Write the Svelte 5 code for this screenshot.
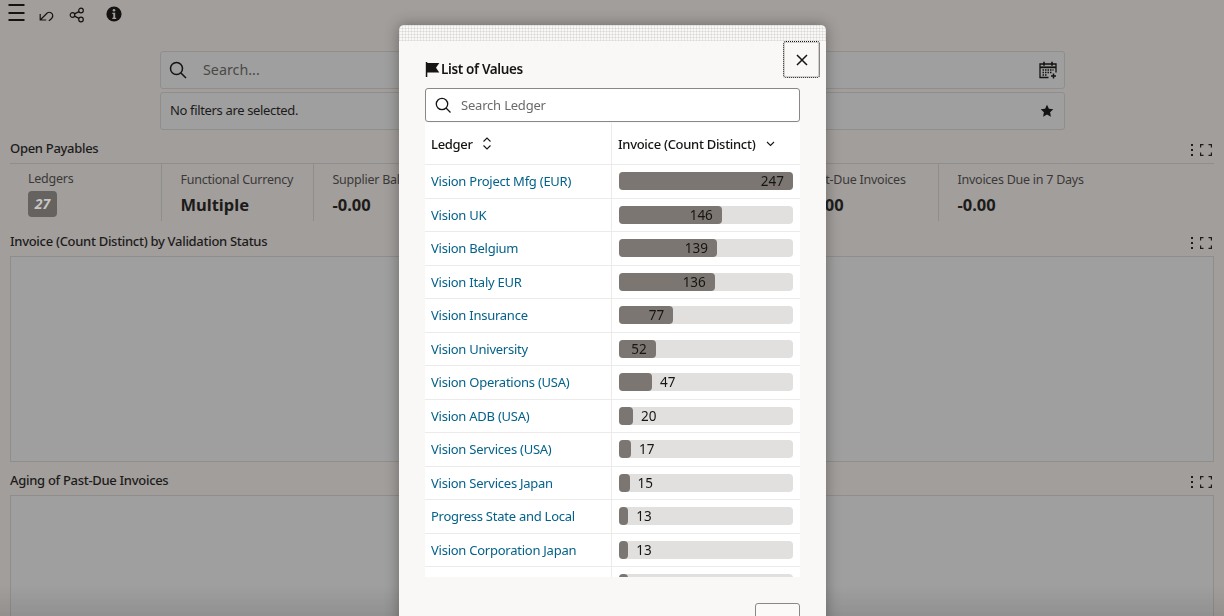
<script>
	const rows = [
		{ name: "Vision Project Mfg (EUR)", count: 247 },
		{ name: "Vision UK", count: 146 },
		{ name: "Vision Belgium", count: 139 },
		{ name: "Vision Italy EUR", count: 136 },
		{ name: "Vision Insurance", count: 77 },
		{ name: "Vision University", count: 52 },
		{ name: "Vision Operations (USA)", count: 47 },
		{ name: "Vision ADB (USA)", count: 20 },
		{ name: "Vision Services (USA)", count: 17 },
		{ name: "Vision Services Japan", count: 15 },
		{ name: "Progress State and Local", count: 13 },
		{ name: "Vision Corporation Japan", count: 13 },
		{ name: "", count: 11 },
	];
	const max = 247;
	const kpis = [
		{ label: "Functional Currency", value: "Multiple" },
		{ label: "Supplier Balance", value: "-0.00" },
		{ label: "Past-Due Invoices", value: "-0.00" },
		{ label: "Invoices Due in 7 Days", value: "-0.00" },
	];
</script>

<div class="page">
	<header class="toolbar">
		<svg class="menu" width="18" height="17" viewBox="0 0 18 17"><path d="M.500 1h16M.500 9h16M.500 16h16" stroke="#141312" stroke-width="2" fill="none" /></svg>
		<svg class="undo" width="16" height="16" viewBox="0 0 16 16" fill="none" stroke="#141312" stroke-width="1.200"><path d="M2.200 6v6h6M2.200 12L9.200 5c2.500-1.800 5.600 0 5.600 2.800 0 1.600-1.400 3.400-4 4.900" /></svg>
		<svg class="share" width="16" height="16" viewBox="0 0 16 16" fill="none" stroke="#141312" stroke-width="1.200"><circle cx="3.500" cy="8" r="2.300" /><circle cx="12" cy="3.500" r="2.300" /><circle cx="12" cy="12.500" r="2.300" /><path d="M5.500 6.900l4.500-2.300M5.500 9.100l4.500 2.300" /></svg>
		<svg class="info" width="16" height="16" viewBox="0 0 16 16"><circle cx="8" cy="8" r="7.600" fill="#141312" /><circle cx="8" cy="4.200" r="1.300" fill="#a29e9c" /><path d="M6.300 6.800h2.900v5h1v1.300H6.300v-1.300h1v-3.700h-1z" fill="#a29e9c" /></svg>
	</header>

	<section class="filters">
		<div class="filter-box search">
			<svg width="18" height="18" viewBox="0 0 18 18" fill="none" stroke="#141312" stroke-width="1.500"><circle cx="7.500" cy="7.500" r="6" /><path d="M12 12l5 5" /></svg>
			<span class="placeholder">Search...</span>
			<svg class="calendar" width="18" height="18" viewBox="0 0 18 18" fill="none" stroke="#141312" stroke-width="1.300"><path d="M9.500 16.500H1V3h16v8.500" /><path d="M1 6.300h16" stroke-width="1.800" /><path d="M5 .8v4M13 .8v4" stroke-width="1.600" /><path d="M3.500 9h11M3.500 11.500h9M3.500 14h5" stroke-dasharray="1.500 1" /><path d="M14.500 12.500v5M12 15h5" stroke-width="1.500" /></svg>
		</div>
		<div class="filter-box status">
			<span>No filters are selected.</span>
			<svg class="star" width="14" height="14" viewBox="0 0 14 14"><path d="M7 .8l1.900 4 4.400.5-3.200 3 .8 4.400L7 10.600 3.100 12.700l.8-4.400-3.200-3 4.400-.5z" fill="#141312" /></svg>
		</div>
	</section>

	<section class="open-payables">
		<div class="section-head ruled">
			<h2>Open Payables</h2>
			{@render tools()}
		</div>
		<div class="kpis">
			<div class="kpi first">
				<span class="kpi-label">Ledgers</span>
				<span class="badge">27</span>
			</div>
			{#each kpis as kpi}
				<div class="kpi">
					<span class="kpi-label">{kpi.label}</span>
					<span class="kpi-value">{kpi.value}</span>
				</div>
			{/each}
		</div>
	</section>

	<section class="chart-section">
		<div class="section-head">
			<h2>Invoice (Count Distinct) by Validation Status</h2>
			{@render tools()}
		</div>
		<div class="chart tall"></div>
	</section>

	<section class="chart-section">
		<div class="section-head">
			<h2>Aging of Past-Due Invoices</h2>
			{@render tools()}
		</div>
		<div class="chart"></div>
	</section>
</div>

<div class="bottom-fade"></div>

<div class="modal">
	<div class="modal-strip"></div>
	<button class="close" aria-label="Close">
		<svg width="12" height="12" viewBox="0 0 12 12" stroke="#161513" stroke-width="1.500"><path d="M1 1l10 10M11 1L1 11" /></svg>
	</button>
	<div class="modal-body">
		<h3>
			<svg width="15" height="15" viewBox="0 0 15 15"><path d="M.800 0h1.500v15H.800zM2.300 1h12l-3.300 4.800 3.300 4.700h-12z" fill="#161513" /></svg>
			List of Values
		</h3>
		<div class="modal-search">
			<svg width="16" height="16" viewBox="0 0 16 16" fill="none" stroke="#161513" stroke-width="1.300"><circle cx="7" cy="7" r="5.700" /><path d="M11 11l4.500 4.500" /></svg>
			<span>Search Ledger</span>
		</div>
		<div class="table">
			<div class="row head">
				<div class="cell name">
					Ledger
					<svg class="sort updown" width="10" height="13" viewBox="0 0 10 13" fill="none" stroke="#161513" stroke-width="1.100"><path d="M1.500 4.500L5 1l3.500 3.500M1.500 8.500L5 12l3.500-3.500" /></svg>
				</div>
				<div class="cell measure-head">
					Invoice (Count Distinct)
					<svg class="sort" width="9" height="6" viewBox="0 0 9 6" fill="none" stroke="#161513" stroke-width="1.100"><path d="M1 1l3.500 3.500L8 1" /></svg>
				</div>
			</div>
			{#each rows as row}
				{@const width = (row.count / max) * 100}
				<div class="row">
					<div class="cell name"><a href="#ledger">{row.name}</a></div>
					<div class="cell">
						<div class="bar">
							<div class="fill" style="width: {width}%">
								{#if row.count > 50}<span class="inside">{row.count}</span>{/if}
							</div>
							{#if row.count <= 50 && row.name}<span class="outside">{row.count}</span>{/if}
						</div>
					</div>
				</div>
			{/each}
		</div>
	</div>
	<div class="modal-foot"><button class="done" aria-label="Done"></button></div>
</div>

{#snippet tools()}
	<div class="tools">
		<svg width="4" height="12" viewBox="0 0 4 12"><path d="M1 0h2v2H1zM1 5h2v2H1zM1 10h2v2H1z" fill="#1c1b1a" /></svg>
		<svg width="12" height="12" viewBox="0 0 12 12" fill="none" stroke="#1c1b1a" stroke-width="1.200"><path d="M.6 3.500V.6h2.900M8.500.6h2.900v2.900M11.400 8.500v2.900H8.500M3.500 11.400H.6V8.500" /></svg>
	</div>
{/snippet}

<style>
	:global(body) {
		margin: 0;
		background: #a29e9c;
		overflow: hidden;
		font-family: "Noto Sans", "Open Sans", sans-serif;
		color: #1c1b1a;
	}

	.page {
		height: 616px;
		overflow: hidden;
		padding: 0 10px;
		box-sizing: border-box;
	}

	.toolbar {
		display: flex;
		align-items: center;
		height: 30px;
		margin-left: -2px;
	}

	.menu {
		margin-top: -5px;
	}

	.undo {
		margin-left: 12px;
		margin-top: 1px;
	}

	.share {
		margin-left: 15px;
	}

	.info {
		margin-left: 20.500px;
		margin-top: -2px;
	}

	.filters {
		display: flex;
		flex-direction: column;
		gap: 3px;
		margin: 21px 149px 0 150px;
	}

	.filter-box {
		display: flex;
		align-items: center;
		box-sizing: border-box;
		background: #9f9f9f;
		border: 1px solid #8f8e8c;
		border-radius: 3px;
	}

	.search {
		height: 38px;
		padding: 0 7px 0 8px;
	}

	.placeholder {
		margin-left: 16px;
		padding-bottom: 2px;
		font-size: 14.300px;
		color: #4a4947;
	}

	.calendar {
		margin-left: auto;
	}

	.status {
		height: 38px;
		padding: 0 10px 0 9px;
		font-size: 13px;
		letter-spacing: -0.35px;
		justify-content: space-between;
	}

	.status span {
		padding-bottom: 2px;
	}

	.open-payables {
		margin-top: 9px;
	}

	.section-head {
		display: flex;
		align-items: center;
		justify-content: space-between;
		height: 24px;
		padding-right: 2px;
	}

	.section-head.ruled {
		box-sizing: content-box;
		height: 20px;
		padding-bottom: 4px;
		border-bottom: 1px solid #8f8e8c;
		align-items: flex-start;
	}

	.section-head.ruled .tools {
		margin-top: 5px;
	}

	h2 {
		margin: 0;
		font-size: 13px;
		line-height: 18px;
		font-weight: 500;
		letter-spacing: -0.3px;
	}

	.tools {
		display: flex;
		align-items: center;
		gap: 6px;
	}

	.kpis {
		display: grid;
		grid-template-columns: 152px 152px 473px 152px 1fr;
		height: 58px;
	}

	.kpi {
		display: flex;
		flex-direction: column;
		padding: 7px 0 0 18.500px;
		border-right: 1px solid #8f8e8c;
		box-sizing: border-box;
		height: 57px;
		gap: 5px;
	}

	.kpi:last-child {
		border-right: none;
	}

	.kpi.first {
		padding-left: 18px;
		padding-top: 6px;
		gap: 4px;
	}

	.kpi-label {
		font-size: 12.500px;
		line-height: 17px;
		letter-spacing: -0.25px;
		color: #3a3937;
	}

	.kpi-value {
		font-size: 16.500px;
		line-height: 24px;
		font-weight: 700;
	}

	.badge {
		width: 29px;
		height: 26px;
		line-height: 26px;
		text-align: center;
		border-radius: 4px;
		background: #656260;
		color: #c8c6c4;
		font-size: 14px;
		font-weight: 700;
		font-style: italic;
	}

	.chart-section .section-head {
		height: 34px;
		padding-top: 4px;
		box-sizing: border-box;
	}

	.chart-section .tools {
		margin-top: 4px;
	}

	.chart {
		height: 140px;
		background: #9f9f9f;
		border: 1px solid #8f8e8c;
	}

	.chart.tall {
		height: 204px;
		margin-bottom: -1px;
	}

	.bottom-fade {
		position: fixed;
		left: 0;
		right: 0;
		bottom: 0;
		height: 30px;
		background: linear-gradient(to bottom, rgba(70, 70, 70, 0), rgba(70, 70, 70, 0.16));
	}

	.modal {
		position: fixed;
		left: 399px;
		top: 25px;
		width: 427px;
		height: 610px;
		box-sizing: border-box;
		background: #f9f8f6;
		border-radius: 5px 5px 0 0;
		box-shadow: 0 0 14px rgba(40, 38, 36, 0.45);
		color: #161513;
	}

	.modal-strip {
		height: 16px;
		border-radius: 5px 5px 0 0;
		background:
			repeating-linear-gradient(90deg, rgba(150, 150, 150, 0.18) 0 1px, transparent 1px 3px),
			repeating-linear-gradient(0deg, rgba(150, 150, 150, 0.18) 0 1px, transparent 1px 3px);
	}

	.close {
		position: absolute;
		top: 16px;
		right: 6px;
		width: 37px;
		height: 37px;
		display: flex;
		align-items: center;
		justify-content: center;
		padding: 0;
		background: none;
		border: 1px dotted #161513;
		box-shadow: inset 0 0 0 1px rgba(22, 21, 19, 0.18);
		border-radius: 3px;
	}

	.modal-body {
		padding: 0 26px;
	}

	h3 {
		display: flex;
		align-items: center;
		gap: 1px;
		height: 47px;
		margin: 0;
		box-sizing: border-box;
		padding-top: 9px;
		font-size: 13.500px;
		font-weight: 600;
		letter-spacing: -0.35px;
	}

	.modal-search {
		display: flex;
		align-items: center;
		gap: 10px;
		height: 34px;
		box-sizing: border-box;
		padding: 0 9px;
		background: #fff;
		border: 1px solid #8a8886;
		border-radius: 3px;
		font-size: 13px;
		letter-spacing: -0.2px;
		color: #6b6a68;
	}

	.modal-search span {
		padding-bottom: 1px;
	}

	.table {
		height: 454px;
		overflow: hidden;
		background: #fff;
		margin-top: 1px;
	}

	.row {
		display: grid;
		grid-template-columns: 187px 1fr;
		height: 33.500px;
		box-sizing: border-box;
		border-bottom: 1px solid #ecebe9;
		font-size: 13px;
	}

	.row.head {
		height: 42px;
		font-weight: 500;
		letter-spacing: -0.3px;
	}

	.cell {
		display: flex;
		align-items: center;
		padding: 0 7px;
		white-space: nowrap;
	}

	.cell.name {
		padding: 0 6px;
		border-right: 1px solid #ecebe9;
	}

	.measure-head {
		padding-left: 6px;
	}

	.sort {
		margin-left: 11px;
	}

	.sort.updown {
		margin-left: 9px;
	}

	a {
		color: #04628a;
		text-decoration: none;
		letter-spacing: -0.25px;
	}

	.bar {
		display: flex;
		align-items: center;
		width: 174px;
		height: 18px;
		background: #e1e0de;
		border-radius: 4px;
		font-size: 13.500px;
		color: #161513;
	}

	.fill {
		display: flex;
		align-items: center;
		justify-content: flex-end;
		height: 100%;
		background: #7b7671;
		border-radius: 4px;
		box-sizing: border-box;
		padding-right: 9px;
	}

	.outside {
		margin-left: 8px;
	}

	.modal-foot {
		display: flex;
		justify-content: flex-end;
		padding: 26px 26px 0 0;
	}

	.done {
		width: 45px;
		height: 30px;
		background: #fbfaf8;
		border: 1px solid #8a8886;
		border-radius: 3px;
	}
</style>
